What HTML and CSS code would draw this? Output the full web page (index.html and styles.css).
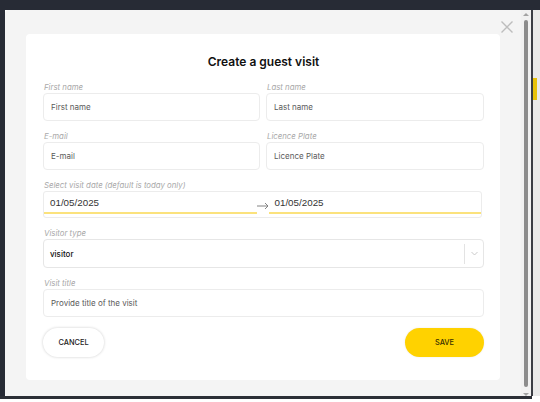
FILE: index.html
```html
<!DOCTYPE html>
<html lang="en">

<head>
  <meta charset="UTF-8">
  <meta name="viewport" content="width=device-width, initial-scale=1.0">
  <title>Create a guest visit</title>
  <link rel="stylesheet" href="styles.css">
</head>

<body>
  <div class="topbar"></div>
  <div class="frame">
    <div class="edge"></div>
    <div class="modal">
      <button class="close" aria-label="Close">
        <svg width="12" height="12" viewBox="0 0 12 12">
          <path d="M0.5 0.5 L11.5 11.5 M11.5 0.5 L0.5 11.5" stroke="#bdbdbd" stroke-width="1.4" fill="none" />
        </svg>
      </button>
      <div class="card">
        <h1>Create a guest visit</h1>
        <div class="form">
          <div class="row">
            <div class="field">
              <span class="label">First name</span>
              <div class="input placeholder">First name</div>
            </div>
            <div class="field">
              <span class="label">Last name</span>
              <div class="input placeholder">Last name</div>
            </div>
          </div>
          <div class="row">
            <div class="field">
              <span class="label">E-mail</span>
              <div class="input placeholder">E-mail</div>
            </div>
            <div class="field">
              <span class="label">Licence Plate</span>
              <div class="input placeholder">Licence Plate</div>
            </div>
          </div>
          <div class="field">
            <span class="label">Select visit date (default is today only)</span>
            <div class="dates">
              <div class="date">01/05/2025</div>
              <span class="arrow">
                <svg width="12" height="8" viewBox="0 0 12 8">
                  <path d="M0 4 H11 M8 1 L11 4 L8 7" stroke="#777" stroke-width="0.9" fill="none" />
                </svg>
              </span>
              <div class="date">01/05/2025</div>
            </div>
          </div>
          <div class="field">
            <span class="label">Visitor type</span>
            <div class="select">
              <span class="value">visitor</span>
              <span class="divider"></span>
              <span class="chevron">
                <svg width="7" height="5" viewBox="0 0 7 5">
                  <path d="M0.5 1 L3.5 4 L6.5 1" stroke="#c4c4c4" stroke-width="0.9" fill="none" />
                </svg>
              </span>
            </div>
          </div>
          <div class="field">
            <span class="label">Visit title</span>
            <div class="input placeholder">Provide title of the visit</div>
          </div>
          <div class="actions">
            <button type="button" class="btn btn-cancel">CANCEL</button>
            <button type="button" class="btn btn-save">SAVE</button>
          </div>
        </div>
      </div>
    </div>
    <div class="scrollbar">
      <span class="up"></span>
      <span class="thumb"></span>
      <span class="down"></span>
    </div>
    <div class="rule"></div>
    <div class="peek">
      <span class="mark"></span>
    </div>
  </div>
  <div class="bottombar"></div>
</body>

</html>
```

FILE: styles.css
```css
* {
  box-sizing: border-box;
}

html,
body {
  height: 402px;
  overflow: hidden;
}

body {
  margin: 0;
  padding: 0;
  background: #fff;
  font-family: "Inter", "Noto Sans", sans-serif;
  color: #333;
}

.topbar {
  height: 10px;
  background: #272b35;
}

.frame {
  display: flex;
  height: 386px;
}

.edge {
  width: 5px;
  background: #272b35;
}

.bottombar {
  height: 3px;
  width: 532px;
  background: #2c2f36;
}

.modal {
  position: relative;
  flex: 1;
  background: #f4f4f4;
  border-radius: 4px 0 0 3px;
  padding: 24px 21px 16px 21px;
}

.close {
  position: absolute;
  top: 11px;
  right: 8px;
  padding: 0;
  border: none;
  background: none;
  width: 12px;
  height: 12px;
  line-height: 0;
}

.card {
  background: #fff;
  border-radius: 4px;
  height: 346px;
  padding: 20px 16px 0 17px;
}

h1 {
  margin: 0 0 12px;
  font-size: 12px;
  line-height: 16px;
  font-weight: 600;
  text-align: center;
  color: #111;
}

.form {
  display: flex;
  flex-direction: column;
  gap: 10px;
}

.row {
  display: grid;
  grid-template-columns: 217px 218px;
  column-gap: 6px;
}

.field {
  display: flex;
  flex-direction: column;
}

.label {
  font-size: 7.8px;
  line-height: 10px;
  font-style: italic;
  color: #a9a9a9;
  margin-bottom: 1px;
  padding-left: 1px;
}

.input {
  display: flex;
  align-items: center;
  height: 28px;
  border: 1px solid #ececec;
  border-radius: 4px;
  padding: 0 7px;
  font-size: 8px;
  color: #333;
  background: #fff;
}

.placeholder {
  color: #5a5a5a;
}

.dates {
  display: flex;
  height: 27px;
  margin-right: 2px;
  border: 1px solid #ececec;
  border-radius: 3px;
}

.date {
  flex: 1;
  height: 22px;
  padding: 5px 0 0 6px;
  font-family: "Liberation Sans", Arial, sans-serif;
  font-size: 9.8px;
  color: #333;
  border-bottom: 2px solid #fbe27c;
}

.arrow {
  width: 12px;
  display: flex;
  align-items: center;
  justify-content: center;
  padding-top: 2px;
}

.select {
  display: flex;
  align-items: center;
  height: 29px;
  border: 1px solid #e6e6e6;
  border-radius: 4px;
  padding-left: 6px;
}

.value {
  flex: 1;
  font-size: 8px;
  font-weight: 500;
  color: #111;
}

.divider {
  width: 1px;
  height: 20px;
  background: #e3e3e3;
}

.chevron {
  width: 18px;
  display: flex;
  justify-content: center;
  line-height: 0;
}

.actions {
  display: flex;
  justify-content: space-between;
  margin-top: 1px;
}

.btn {
  height: 29px;
  border: none;
  border-radius: 15px;
  font-family: "Inter", "Noto Sans", sans-serif;
  font-size: 7.4px;
  font-weight: 500;
  color: #222;
  cursor: pointer;
}

.btn-cancel {
  width: 61px;
  background: #fff;
  box-shadow: 0 0 3px rgba(0, 0, 0, 0.2);
}

.btn-save {
  width: 79px;
  background: #ffd200;
  color: #3a3000;
  box-shadow: 0 0 2px rgba(0, 0, 0, 0.1);
}

.scrollbar {
  flex: none;
  width: 10px;
  background: #f1f1f1;
  display: flex;
  flex-direction: column;
  align-items: center;
  padding: 3px 0 0;
}

.up,
.down {
  width: 0;
  height: 0;
  border-left: 3px solid transparent;
  border-right: 3px solid transparent;
}

.up {
  border-bottom: 3px solid #a3a3a3;
}

.down {
  border-top: 3px solid #a3a3a3;
}

.thumb {
  flex: 1;
  width: 4px;
  margin: 4px 0 6px;
  border-radius: 2px;
  background: #8c8c8c;
}

.rule {
  width: 2px;
  background: #3a3d44;
}

.peek {
  position: relative;
  flex: 1;
  background: #e9e9e9;
}

.mark {
  position: absolute;
  top: 68px;
  left: 0;
  width: 4px;
  height: 22px;
  background: #e8c20a;
}
```
